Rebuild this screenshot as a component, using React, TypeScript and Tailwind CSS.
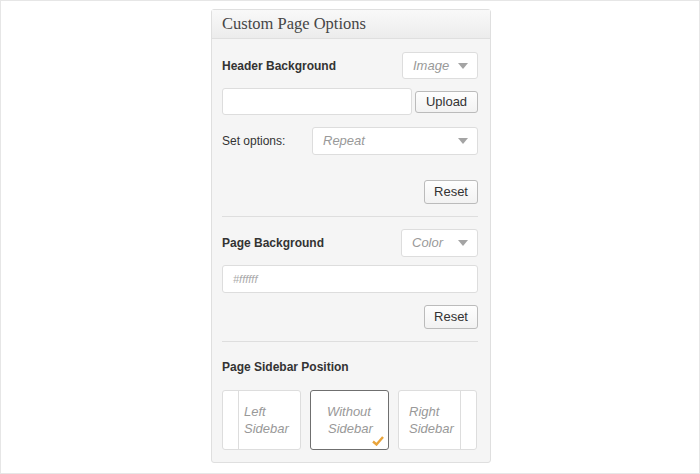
import React from "react";

const Arrow = () => (
  <svg width="10" height="6" viewBox="0 0 10 6" className="shrink-0">
    <path d="M0 0 L10 0 L5 6 Z" fill="#a4a4a4" />
  </svg>
);

const Select = ({ label, className }: { label: string; className: string }) => (
  <div
    className={`flex items-center justify-between rounded-[3px] border border-[#dddddd] bg-white pl-[10px] pr-[9px] text-[13px] italic text-[#999999] ${className}`}
  >
    <span>{label}</span>
    <Arrow />
  </div>
);

const Btn = ({ label, className }: { label: string; className: string }) => (
  <div
    className={`flex items-center justify-center rounded-[3px] border border-[#bbbbbb] bg-gradient-to-b from-[#fefefe] to-[#f2f2f2] text-[13px] text-[#333333] ${className}`}
  >
    {label}
  </div>
);

const Check = () => (
  <svg width="12" height="10" viewBox="0 0 12 10" className="absolute bottom-[3px] right-[4px]">
    <path d="M1 5.5 L4.5 8.5 L11 1" fill="none" stroke="#e9a43a" strokeWidth="2.4" />
  </svg>
);

const App = () => {
  return (
    <div className="box-border h-[474px] w-[700px] border border-[#e6e6e6] bg-white font-['Liberation_Sans',Arial,sans-serif]">
      <div className="ml-[210px] mt-[8px] w-[280px] rounded-[3px] border border-[#dfdfdf] bg-[#f5f5f5]">
        <div className="flex h-[29px] items-center border-b border-[#dfdfdf] bg-gradient-to-b from-[#f9f9f9] to-[#ececec] px-[10px] font-['Liberation_Serif',Georgia,serif] text-[16.5px] text-[#464646]">
          Custom Page Options
        </div>

        <div className="pl-[10px] pr-[12px] pt-[13px] pb-[12px]">
          <div className="flex items-center justify-between">
            <span className="text-[12px] font-bold text-[#333333]">Header Background</span>
            <Select label="Image" className="h-[27px] w-[76px]" />
          </div>

          <div className="mt-[9px] flex items-center justify-between">
            <div className="h-[27px] w-[190px] rounded-[3px] border border-[#dddddd] bg-white" />
            <Btn label="Upload" className="h-[22px] w-[63px]" />
          </div>

          <div className="mt-[12px] flex items-center justify-between">
            <span className="text-[12px] text-[#333333]">Set options:</span>
            <Select label="Repeat" className="h-[28px] w-[166px]" />
          </div>

          <div className="mt-[25px] flex justify-end">
            <Btn label="Reset" className="h-[24px] w-[54px]" />
          </div>

          <div className="mt-[12px] h-px bg-[#dedede]" />

          <div className="mt-[12px] flex items-center justify-between">
            <span className="text-[12px] font-bold text-[#333333]">Page Background</span>
            <Select label="Color" className="h-[28px] w-[77px]" />
          </div>

          <div className="mt-[8px] flex h-[28px] items-center rounded-[3px] border border-[#dddddd] bg-white px-[10px] text-[11px] italic text-[#aaaaaa]">
            #ffffff
          </div>

          <div className="mt-[12px] flex justify-end">
            <Btn label="Reset" className="h-[24px] w-[54px]" />
          </div>

          <div className="mt-[12px] h-px bg-[#dedede]" />

          <div className="mt-[16px] text-[12px] font-bold text-[#333333]">Page Sidebar Position</div>

          <div className="mt-[14px] flex gap-[9px]">
            <div className="flex h-[60px] w-[79px] overflow-hidden rounded-[3px] border border-[#dddddd] bg-white">
              <div className="w-[16px] border-r border-[#dddddd]" />
              <div className="flex flex-col justify-center pl-[5px] text-[13px] italic leading-[17px] text-[#999999]">
                <span>Left</span>
                <span>Sidebar</span>
              </div>
            </div>
            <div className="relative flex h-[60px] w-[79px] flex-col justify-center rounded-[3px] border border-[#6f6f6f] bg-white pl-[16px] text-[13px] italic leading-[17px] text-[#999999]">
              <span>Without</span>
              <span className="pl-px">Sidebar</span>
              <Check />
            </div>
            <div className="flex h-[60px] w-[79px] overflow-hidden rounded-[3px] border border-[#dddddd] bg-white">
              <div className="flex flex-1 flex-col justify-center pl-[10px] text-[13px] italic leading-[17px] text-[#999999]">
                <span>Right</span>
                <span>Sidebar</span>
              </div>
              <div className="w-[16px] border-l border-[#dddddd]" />
            </div>
          </div>
        </div>
      </div>
    </div>
  );
};

export default App;
